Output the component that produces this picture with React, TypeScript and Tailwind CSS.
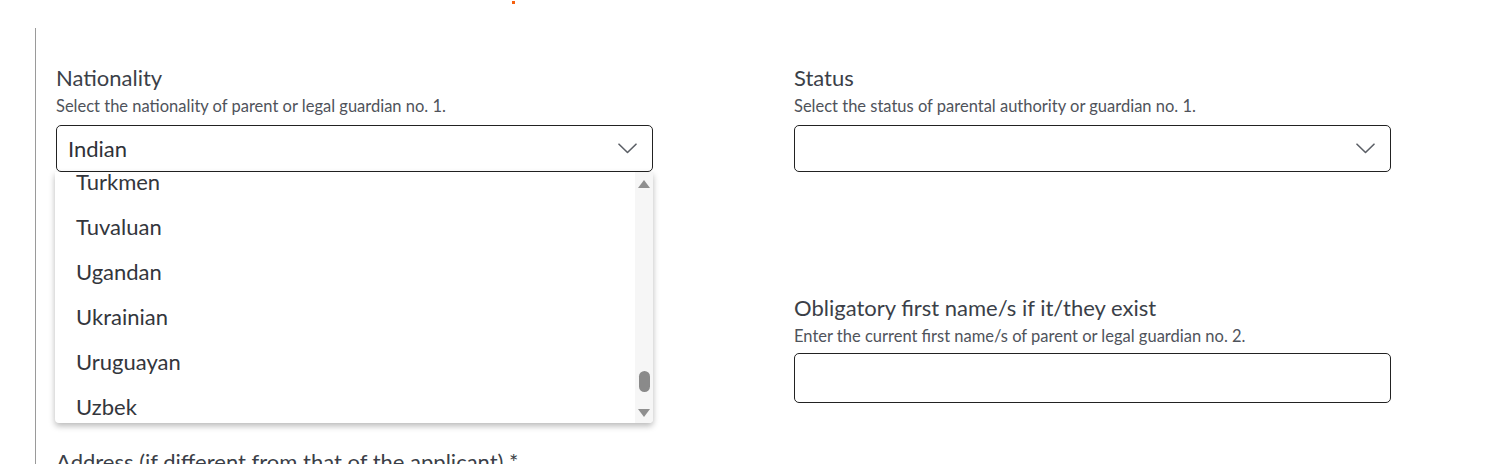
import { ChangeEvent } from "react";

const OPTIONS = ["Turkmen", "Tuvaluan", "Ugandan", "Ukrainian", "Uruguayan", "Uzbek"];

function Chevron() {
  return (
    <svg width="19" height="11" viewBox="0 0 19 11" fill="none" className="text-[#5b5f66]">
      <path d="M1 1.2L9.5 9.5L18 1.2" stroke="currentColor" strokeWidth="1.6" strokeLinecap="round" strokeLinejoin="round" />
    </svg>
  );
}

function FieldHead({ label, help }: { label: string; help: string }) {
  return (
    <>
      <div className="text-[22px] leading-[24px] text-[#3b3f48]">{label}</div>
      <div className="mt-[7px] text-[16.5px] leading-[18px] text-[#4f535b]">{help}</div>
    </>
  );
}

export default function App() {
  return (
    <div
      className="relative h-[464px] w-full overflow-hidden bg-white"
      style={{ fontFamily: "Lato, 'Noto Sans', sans-serif" }}
    >
      {/* stray marker at the top */}
      <div className="absolute left-[512px] top-[1px] h-[3px] w-[3px] bg-[#f5600f]" />

      <div className="pl-[35px] pt-[28px]">
        <div className="border-l border-[#9a9a9a] pl-[20px] pt-[38px] pb-10">
          <div className="grid grid-cols-[597px_597px] gap-x-[141px]">
            {/* Nationality */}
            <div className="relative">
              <FieldHead label="Nationality" help="Select the nationality of parent or legal guardian no. 1." />
              <div className="mt-[10px] flex h-[47px] items-center justify-between rounded-[5px] border border-[#222] pl-[11px] pr-[15px]">
                <span className="text-[22px] text-[#2f3238]">Indian</span>
                <Chevron />
              </div>

              {/* open list */}
              <div className="absolute left-[-1px] right-0 top-[106px] z-10 flex h-[251px] overflow-hidden rounded-b-[4px] bg-white shadow-[0_3px_6px_rgba(0,0,0,0.28)]">
                <div className="flex-1 overflow-hidden">
                  <div className="mt-[-13px]">
                    {OPTIONS.map((o) => (
                      <div key={o} className="flex h-[45px] items-center pl-[21px] text-[22px] text-[#33363c]">
                        {o}
                      </div>
                    ))}
                  </div>
                </div>
                <div className="flex w-[18px] flex-col items-center bg-[#f6f6f6] pt-[8px] pb-[6px]">
                  <div className="h-0 w-0 border-x-[6px] border-b-[8px] border-x-transparent border-b-[#8f8f8f]" />
                  <div className="flex-1" />
                  <div className="h-[21px] w-[11px] rounded-full bg-[#8a8a8a]" />
                  <div className="h-[17px]" />
                  <div className="h-0 w-0 border-x-[6px] border-t-[8px] border-x-transparent border-t-[#8f8f8f]" />
                </div>
              </div>
            </div>

            {/* Status */}
            <div>
              <FieldHead label="Status" help="Select the status of parental authority or guardian no. 1." />
              <div className="mt-[10px] flex h-[47px] items-center justify-end rounded-[5px] border border-[#222] pr-[15px]">
                <Chevron />
              </div>
            </div>

            <div />
            <div className="mt-[124px]">
              <FieldHead
                label="Obligatory first name/s if it/they exist"
                help="Enter the current first name/s of parent or legal guardian no. 2."
              />
              <input
                className="mt-[8px] block h-[50px] w-full rounded-[5px] border border-[#222] px-[11px] text-[22px] outline-none"
                onChange={(e: ChangeEvent<HTMLInputElement>) => e}
              />
            </div>

            <div className="mt-[47px]">
              <div className="text-[22px] leading-[24px] text-[#3b3f48]">
                Address (if different from that of the applicant) *
              </div>
            </div>
          </div>
        </div>
      </div>
    </div>
  );
}
